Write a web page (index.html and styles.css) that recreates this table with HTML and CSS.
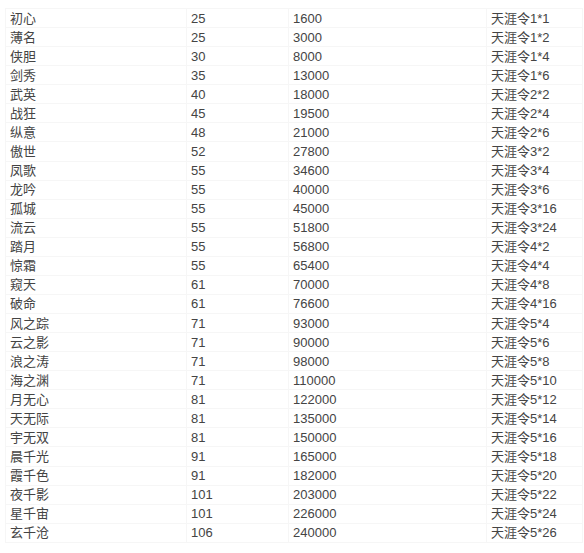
FILE: index.html
```html
<!DOCTYPE html>
<html lang="zh">
<head>
<meta charset="utf-8">
<link rel="stylesheet" href="styles.css">
</head>
<body>
<table class="tbl">
<colgroup><col class="c1"><col class="c2"><col class="c3"><col class="c4"></colgroup>
<tbody>
<tr><td>初心</td><td>25</td><td>1600</td><td>天涯令1*1</td></tr>
<tr><td>薄名</td><td>25</td><td>3000</td><td>天涯令1*2</td></tr>
<tr><td>侠胆</td><td>30</td><td>8000</td><td>天涯令1*4</td></tr>
<tr><td>剑秀</td><td>35</td><td>13000</td><td>天涯令1*6</td></tr>
<tr><td>武英</td><td>40</td><td>18000</td><td>天涯令2*2</td></tr>
<tr><td>战狂</td><td>45</td><td>19500</td><td>天涯令2*4</td></tr>
<tr><td>纵意</td><td>48</td><td>21000</td><td>天涯令2*6</td></tr>
<tr><td>傲世</td><td>52</td><td>27800</td><td>天涯令3*2</td></tr>
<tr><td>凤歌</td><td>55</td><td>34600</td><td>天涯令3*4</td></tr>
<tr><td>龙吟</td><td>55</td><td>40000</td><td>天涯令3*6</td></tr>
<tr><td>孤城</td><td>55</td><td>45000</td><td>天涯令3*16</td></tr>
<tr><td>流云</td><td>55</td><td>51800</td><td>天涯令3*24</td></tr>
<tr><td>踏月</td><td>55</td><td>56800</td><td>天涯令4*2</td></tr>
<tr><td>惊霜</td><td>55</td><td>65400</td><td>天涯令4*4</td></tr>
<tr><td>窥天</td><td>61</td><td>70000</td><td>天涯令4*8</td></tr>
<tr><td>破命</td><td>61</td><td>76600</td><td>天涯令4*16</td></tr>
<tr><td>风之踪</td><td>71</td><td>93000</td><td>天涯令5*4</td></tr>
<tr><td>云之影</td><td>71</td><td>90000</td><td>天涯令5*6</td></tr>
<tr><td>浪之涛</td><td>71</td><td>98000</td><td>天涯令5*8</td></tr>
<tr><td>海之渊</td><td>71</td><td>110000</td><td>天涯令5*10</td></tr>
<tr><td>月无心</td><td>81</td><td>122000</td><td>天涯令5*12</td></tr>
<tr><td>天无际</td><td>81</td><td>135000</td><td>天涯令5*14</td></tr>
<tr><td>宇无双</td><td>81</td><td>150000</td><td>天涯令5*16</td></tr>
<tr><td>晨千光</td><td>91</td><td>165000</td><td>天涯令5*18</td></tr>
<tr><td>霞千色</td><td>91</td><td>182000</td><td>天涯令5*20</td></tr>
<tr><td>夜千影</td><td>101</td><td>203000</td><td>天涯令5*22</td></tr>
<tr><td>星千宙</td><td>101</td><td>226000</td><td>天涯令5*24</td></tr>
<tr><td>玄千沧</td><td>106</td><td>240000</td><td>天涯令5*26</td></tr>
</tbody>
</table>
</body>
</html>
```
FILE: styles.css
```css
html, body {
  margin: 0;
  background: #ffffff;
}
body {
  padding: 8px 2px 0 5px;
}
.tbl {
  border-collapse: collapse;
  width: 577px;
  table-layout: fixed;
  font-family: Arial, "Liberation Sans", "Noto Sans CJK SC", sans-serif;
  font-size: 13px;
  color: #444444;
}
.c1 { width: 181px; }
.c2 { width: 102px; }
.c3 { width: 198px; }
.c4 { width: 96px; }
.tbl tr {
  height: 19.07px;
}
.tbl td {
  border: 1px solid #f6f6f6;
  padding: 0 0 0 4px;
  line-height: 17px;
  white-space: nowrap;
  vertical-align: middle;
}
```
